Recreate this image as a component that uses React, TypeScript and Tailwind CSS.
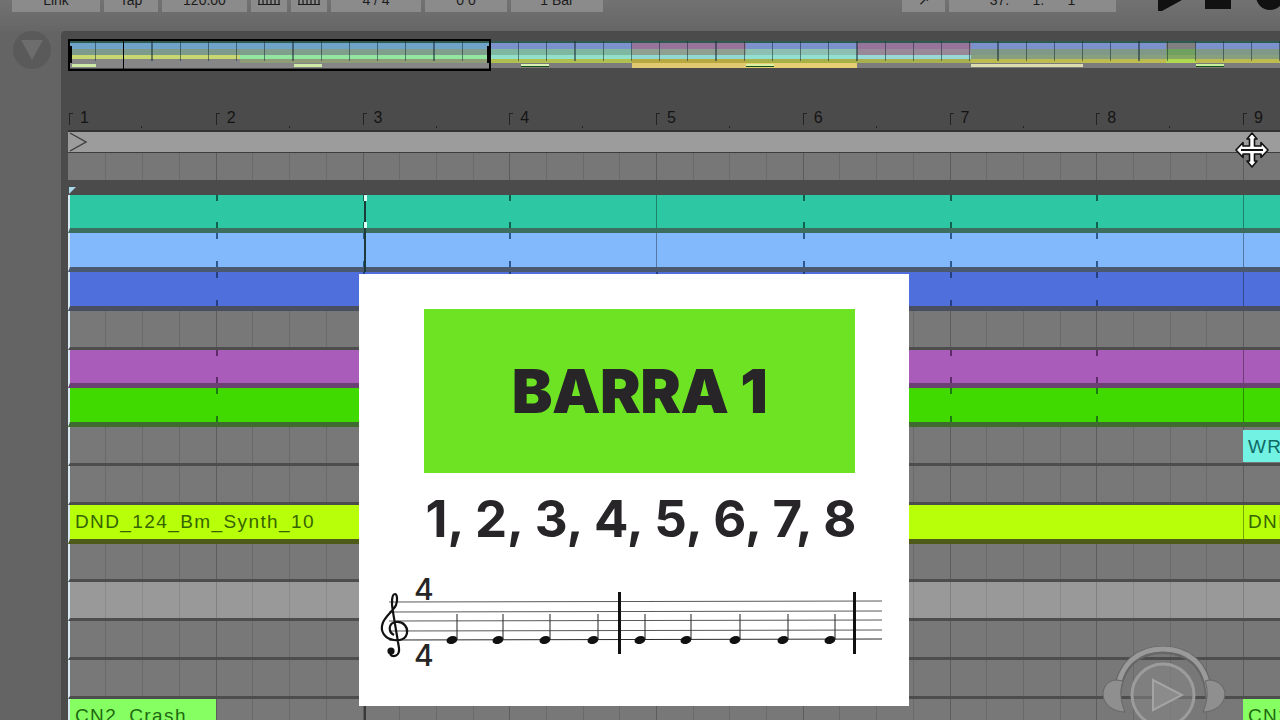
const BAR_COUNT = [0, 1, 2, 3, 4, 5, 6, 7, 8];

type Track = {
  body: string;
  band: string;
  clip?: boolean;
  tick?: string;
  solid?: number[];
  light?: boolean;
};

const tracks: Track[] = [
  { body: "bg-[#2dc8a3]", band: "border-[#3c6d5e]", clip: true, tick: "bg-[#11614f]", solid: [4, 8] },
  { body: "bg-[#81b9fc]", band: "border-[#4a5870]", clip: true, tick: "bg-[#2c5a8c]", solid: [4, 8] },
  { body: "bg-[#4f70dc]", band: "border-[#4a4f60]", clip: true, tick: "bg-[#24407e]", solid: [8] },
  { body: "bg-[#787878]", band: "border-[#4d4d4d]" },
  { body: "bg-[#a95cb9]", band: "border-[#6b4072]", clip: true, tick: "bg-[#5e2a6a]", solid: [8] },
  { body: "bg-[#40d900]", band: "border-[#3f6a30]", clip: true, tick: "bg-[#1d7a10]", solid: [8] },
  { body: "bg-[#787878]", band: "border-[#4d4d4d]" },
  { body: "bg-[#787878]", band: "border-[#4d4d4d]" },
  { body: "bg-[#b8ff0a]", band: "border-[#4d5a18]", clip: true, solid: [8] },
  { body: "bg-[#787878]", band: "border-[#4d4d4d]" },
  { body: "bg-[#999999]", band: "border-[#4d4d4d]", light: true },
  { body: "bg-[#787878]", band: "border-[#4d4d4d]" },
  { body: "bg-[#787878]", band: "border-[#4d4d4d]" },
  { body: "bg-[#787878]", band: "border-[#4d4d4d]" },
];

// overview strip: one segment per scene, bands run top to bottom
const overview = [
  { w: "w-[170px]", bands: ["#6fa3c8", "#7e9a8c", "#c8d870", "#868686"], low: "#868686", mark: "ml-[2px] w-[24px] bg-[#cdeaa6]" },
  { w: "w-[251px]", bands: ["#6fa3c8", "#7f9f8c", "#92e6a2", "#8f9c78"], low: "#868686", mark: "ml-[54px] w-[28px] bg-[#cdeaa6]" },
  { w: "w-[141px]", bands: ["#7c92cc", "#7fb8a0", "#92e0cc", "#b0c050"], low: "#7c7c7c", mark: "ml-[30px] w-[28px] bg-[#d8f0b0] border-b border-[#14501c]" },
  { w: "w-[114px]", bands: ["#96749c", "#90a090", "#92d8d2", "#b8a840"], low: "#e2c870", mark: "" },
  { w: "w-[111px]", bands: ["#7c92cc", "#8cc0b0", "#92e0d2", "#a8b048"], low: "#e6cf72", mark: "w-[28px] bg-[#d8f0a0] border-b border-[#14501c]" },
  { w: "w-[114px]", bands: ["#96749c", "#988898", "#98d8d8", "#a8b050"], low: "#7c7c7c", mark: "" },
  { w: "w-[195px]", bands: ["#7c92cc", "#809888", "#88a080", "#bcbc50"], low: "#7c7c7c", mark: "w-[112px] bg-[#dcdcae]" },
  { w: "w-[30px]", bands: ["#808080", "#70a060", "#84a864", "#b0d850"], low: "#7c7c7c", mark: "" },
  { w: "w-[90px]", bands: ["#7c92cc", "#809888", "#88a080", "#bcbc50"], low: "#7c7c7c", mark: "w-[28px] bg-[#c8f09a] border-b border-[#14501c]" },
];

function ToolButton({ w, label, ml }: { w: string; label?: string; ml?: string }) {
  return (
    <div className={`flex h-[12px] shrink-0 ${w} ${ml ?? ""} items-start justify-center overflow-hidden bg-[#8b8b8b] font-['Liberation_Sans',sans-serif] text-[14px] leading-[14px] whitespace-pre text-[#1c1c1c]`}>
      {label ? (
        <span className="-mt-[7px]">{label}</span>
      ) : (
        <svg width="26" height="6" viewBox="0 0 26 6">
          <path d="M3 0v4M7 0v4M11 0v4M15 0v4M19 0v4M23 0v4M2 4.5h22" stroke="#1c1c1c" strokeWidth="1.2" />
        </svg>
      )}
    </div>
  );
}

function Toolbar() {
  return (
    <div className="flex h-[31px] shrink-0 items-start gap-[4px] bg-gradient-to-b from-[#727272] to-[#666666] pl-[12px]">
      <ToolButton w="w-[88px]" label="Link" />
      <ToolButton w="w-[54px]" label="Tap" />
      <ToolButton w="w-[85px]" label="120.00" />
      <ToolButton w="w-[36px]" />
      <ToolButton w="w-[36px]" />
      <ToolButton w="w-[90px]" label="4 / 4" />
      <ToolButton w="w-[82px]" label="0 0" />
      <ToolButton w="w-[92px]" label="1 Bar" />
      <ToolButton w="w-[43px]" label="↗" ml="ml-[295px]" />
      <ToolButton w="w-[167px]" label="37.      1.      1" />
      <svg width="166" height="14" viewBox="0 0 166 14" className="ml-[38px] shrink-0">
        <path d="M0 11 L4 11 L24 0 L0 0Z" fill="#111" />
        <rect x="47" y="0" width="26" height="9" fill="#111" />
        <circle cx="112" cy="-4" r="14" fill="#111" />
      </svg>
    </div>
  );
}

function Overview() {
  return (
    <div className="relative mt-[8px] h-[32px] w-[1212px] shrink-0 overflow-hidden py-[2px]">
      <div className="flex h-[27px] bg-[#7c7c7c] pl-[2px]">
        {overview.map((s, i) => (
          <div key={i} className={`flex ${s.w} shrink-0 flex-col border-t-[2px] border-[#2f5a50]`}>
            <div className="h-[6px]" style={{ background: s.bands[0] }} />
            <div className="h-[6px]" style={{ background: s.bands[1] }} />
            <div className="h-[4px]" style={{ background: s.bands[2] }} />
            <div className="h-[4px]" style={{ background: s.bands[3] }} />
            <div className="flex h-[5px] items-center" style={{ background: s.low }}>
              {s.mark && <div className={`h-[3px] ${s.mark}`} />}
            </div>
          </div>
        ))}
      </div>
      {/* beat lines and the black selection frame sit on top of the strip */}
      <div className="absolute inset-x-0 top-[2px] h-[20px] bg-[repeating-linear-gradient(90deg,transparent_0_27px,rgba(25,45,55,0.55)_27px_28.2px)]" />
      <div className="absolute top-0 left-0 h-[32px] w-[423px] border-2 border-black">
        <div className="absolute top-[5px] -left-[2px] h-[17px] w-[4px] bg-black" />
        <div className="absolute top-[5px] -right-[2px] h-[17px] w-[4px] bg-black" />
        <div className="absolute top-0 left-[53px] h-full w-[1px] bg-black" />
      </div>
    </div>
  );
}

function Ruler() {
  return (
    <div className="flex h-[59px] w-[1340px] shrink-0 items-end">
      {BAR_COUNT.map((b) => (
        <div key={b} className={`${b === 0 ? "w-[147.75px] pl-[1px]" : "w-[146.75px]"} relative flex h-[22px] shrink-0 items-start`}>
          <div className="mt-[5px] h-[12px] w-[4px] border-t border-l border-[#222222]" />
          <span className={`mt-[1px] ${b === 0 ? "ml-[7px]" : "ml-[7px]"} font-['Liberation_Sans',sans-serif] text-[16px] leading-[18px] text-[#141414]`}>{b + 1}</span>
          <div className="absolute bottom-[2px] left-[73px] h-[2px] w-[1px] bg-[#222222]" />
        </div>
      ))}
    </div>
  );
}

function Beats({ line, bar }: { line: string; bar: string }) {
  return (
    <div className="flex h-full w-[1340px]">
      {BAR_COUNT.map((b) => (
        <div key={b} className={`flex shrink-0 ${b === 0 ? "w-[147.75px] pl-[1px]" : `w-[146.75px] border-l ${bar}`}`}>
          {[0, 1, 2, 3].map((n) => (
            <div key={n} className={`h-full flex-1 ${n > 0 ? `border-l ${line}` : ""}`} />
          ))}
        </div>
      ))}
    </div>
  );
}

function LoopBar() {
  return (
    <>
      <div className="h-[23px] w-full shrink-0 border-t-2 border-b border-t-[#333333] border-b-[#3d3d3d] bg-[#9c9c9c]">
        <svg width="20" height="20" viewBox="0 0 20 20">
          <path d="M2 1 L18 10 L2 19" fill="none" stroke="#3c3c3c" strokeWidth="1.4" />
        </svg>
      </div>
      <div className="h-[27px] w-full shrink-0 bg-[#777777]">
        <Beats line="border-[#6a6a6a]" bar="border-[#5c5c5c]" />
      </div>
      <div className="relative h-[14.5px] w-full shrink-0">
        <div className="absolute bottom-[1px] left-[1px] h-0 w-0 border-t-[7px] border-r-[7px] border-t-[#a8d8e8] border-r-transparent" />
      </div>
    </>
  );
}

function ClipBars({ t }: { t: Track }) {
  return (
    <div className="flex h-full w-[1340px]">
      {BAR_COUNT.map((b) => (
        <div
          key={b}
          className={`relative shrink-0 ${b === 0 ? "w-[147.75px]" : "w-[146.75px]"} ${t.solid?.includes(b) ? "border-l border-black/35" : ""}`}
        >
          {b > 0 && t.tick && !t.solid?.includes(b) && (
            <>
              <div className={`absolute top-0 left-0 h-[6px] w-[2px] ${t.tick}`} />
              <div className={`absolute bottom-0 left-0 h-[6px] w-[2px] ${t.tick}`} />
            </>
          )}
        </div>
      ))}
    </div>
  );
}

function TrackRow({ t, i }: { t: Track; i: number }) {
  const label = "font-['Liberation_Sans',sans-serif] text-[19px] leading-none tracking-[1.4px] whitespace-nowrap";
  return (
    <div className={`relative h-[38.8px] w-full shrink-0 overflow-hidden border-l-2 border-l-[#d6e8f2] ${t.clip ? "border-b-[5px]" : "border-b-[3px]"} ${t.body} ${t.band}`}>
      <div className="-ml-[2px] h-full">
        {t.clip ? (
          <ClipBars t={t} />
        ) : (
          <Beats line={t.light ? "border-[#8b8b8b]" : "border-[#6a6a6a]"} bar={t.light ? "border-[#808080]" : "border-[#5c5c5c]"} />
        )}
      </div>
      {i === 8 && (
        <>
          <span className={`absolute top-[7px] left-[5px] text-[#356500] ${label}`}>DND_124_Bm_Synth_10</span>
          <span className={`absolute top-[7px] left-[1178px] text-[#356500] ${label}`}>DND_124</span>
        </>
      )}
      {i === 6 && (
        <div className={`absolute top-[3px] left-[1173px] flex h-[32px] w-[60px] items-center bg-[#72f2e2] pl-[5px] text-[#0f6a66] ${label}`}>WRAP</div>
      )}
      {i === 13 && (
        <>
          <div className={`absolute top-0 left-0 h-full w-[146px] bg-[#86ff62] pt-[7px] pl-[5px] text-[#1f6a10] ${label}`}>CN2_Crash</div>
          <div className={`absolute top-0 left-[1173px] h-full w-[60px] bg-[#86ff62] pt-[7px] pl-[5px] text-[#1f6a10] ${label}`}>CN2</div>
        </>
      )}
    </div>
  );
}

function Staff() {
  const notes = [77, 123, 170, 218, 265, 311, 360, 408, 455];
  return (
    <svg width="515" height="105" viewBox="0 0 515 105" className="ml-[5px] shrink-0 self-start">
      {[32, 42, 51, 61, 70].map((y) => (
        <line key={y} x1="14" y1={y} x2="507" y2={y - 1} stroke={y === 70 ? "#2a2a2a" : "#5a5a5a"} strokeWidth="1.2" />
      ))}
      <path
        d="M19 65 C13 62 13 53 21 52 C29 51 33 58 32 63 C31 69 25 71 19 70 C11 69 6 63 7 56 C8 47 18 42 21 35 C23 30 22 24 20 24 C17 24 16 32 18 42 L24 78 C25 86 18 88 15 84"
        fill="none"
        stroke="#111"
        strokeWidth="2.2"
      />
      <circle cx="16" cy="81" r="3.6" fill="#111" />
      <text x="39" y="30" fontFamily="Inter, sans-serif" fontSize="30" fontWeight="500" fill="#262626">4</text>
      <text x="39" y="96" fontFamily="Inter, sans-serif" fontSize="30" fontWeight="500" fill="#262626">4</text>
      {notes.map((x) => (
        <g key={x}>
          <ellipse cx={x} cy="70" rx="5.6" ry="3.9" transform={`rotate(-18 ${x} 70)`} fill="#111" />
          <line x1={x + 5} y1="69" x2={x + 5} y2="44" stroke="#333" strokeWidth="1.1" />
        </g>
      ))}
      <rect x="243" y="22" width="3" height="62" fill="#111" />
      <rect x="478" y="22" width="3" height="62" fill="#111" />
    </svg>
  );
}

function BarCard() {
  return (
    <div className="absolute top-[274px] left-[359px] flex h-[432px] w-[550px] flex-col items-center bg-white pt-[35px] pl-[11px] text-[#272527]">
      <div className="flex h-[164px] w-[431px] shrink-0 items-center justify-center bg-[#6ee324]">
        <span className="font-['Inter',sans-serif] text-[61px] leading-none font-black tracking-[-0.5px]">BARRA 1</span>
      </div>
      <div className="mt-[15px] ml-[3px] flex h-[60px] shrink-0 items-center font-['Inter',sans-serif] text-[51px] leading-none font-bold whitespace-nowrap">
        1, 2, 3, 4, 5, 6, 7, 8
      </div>
      <div className="h-[22px] shrink-0" />
      <Staff />
    </div>
  );
}

function Watermark() {
  return (
    <svg width="130" height="80" viewBox="0 0 130 80" className="absolute top-[644px] left-[1099px]">
      <g fill="none" strokeLinecap="round">
        <path d="M18 52 C20 20 40 6 64 6 C88 6 108 20 110 52" stroke="#666666" strokeWidth="8" />
        <path d="M18 51 C20 19 40 5 64 5 C88 5 108 19 110 51" stroke="#9a9a9a" strokeWidth="5" />
      </g>
      <path d="M18 36 C8 36 4 44 4 50 C4 60 14 68 26 68 C22 58 20 48 24 37Z" fill="#8f8f8f" stroke="#666" strokeWidth="1" />
      <path d="M110 36 C120 36 126 44 126 50 C126 60 116 68 104 68 C108 58 110 48 106 37Z" fill="#8f8f8f" stroke="#666" strokeWidth="1" />
      <circle cx="64" cy="51" r="31" fill="#858585" fillOpacity="0.55" stroke="#9c9c9c" strokeWidth="3" />
      <path d="M54 36 L83 51 L54 66Z" fill="#8b8b8b" stroke="#a4a4a4" strokeWidth="2" />
    </svg>
  );
}

function MoveCursor() {
  return (
    <svg width="34" height="36" viewBox="0 0 34 36" className="absolute top-[132px] left-[1235px]">
      <path
        d="M17 1 L22 7 L19.5 7 L19.5 14 L26 14 L26 10.5 L33 18 L26 25.5 L26 22 L19.5 22 L19.5 29 L22 29 L17 35 L12 29 L14.5 29 L14.5 22 L8 22 L8 25.5 L1 18 L8 10.5 L8 14 L14.5 14 L14.5 7 L12 7Z"
        fill="#fff"
        stroke="#111"
        strokeWidth="1.6"
        strokeLinejoin="round"
      />
      <path d="M6 18 H28" stroke="#111" strokeWidth="2" />
    </svg>
  );
}

export default function App() {
  return (
    <div className="relative flex h-[720px] w-[1280px] flex-col overflow-hidden bg-[#666666]">
      <Toolbar />
      <div className="flex min-h-0 flex-1">
        <div className="flex w-[61px] shrink-0 justify-center bg-[#646464] pl-[3px]">
          <div className="flex h-[38px] w-[38px] items-center justify-center rounded-full bg-[#5a5a5a]">
            <div className="h-0 w-0 border-t-[20px] border-r-[11px] border-l-[11px] border-t-[#6d6d6d] border-r-transparent border-l-transparent" />
          </div>
        </div>
        <div className="flex min-w-0 flex-1 flex-col overflow-hidden rounded-tl-[4px] border-l-[7px] border-[#4b4b4b] bg-[#4b4b4b]">
          <Overview />
          <Ruler />
          <LoopBar />
          {tracks.map((t, i) => (
            <TrackRow key={i} t={t} i={i} />
          ))}
        </div>
      </div>

      {/* insert marker on the top two tracks */}
      <div className="absolute top-[194px] left-[364px] h-[78px] w-[2px] bg-[#1d3a3a]" />
      <div className="absolute top-[195px] left-[364px] h-[6px] w-[3px] bg-[#e0fff4]" />
      <div className="absolute top-[222px] left-[364px] h-[6px] w-[3px] bg-[#e0fff4]" />
      <div className="absolute top-[706px] left-[364px] h-[14px] w-[2px] bg-[#3a3a3a]" />

      <BarCard />
      <Watermark />
      <MoveCursor />
    </div>
  );
}
